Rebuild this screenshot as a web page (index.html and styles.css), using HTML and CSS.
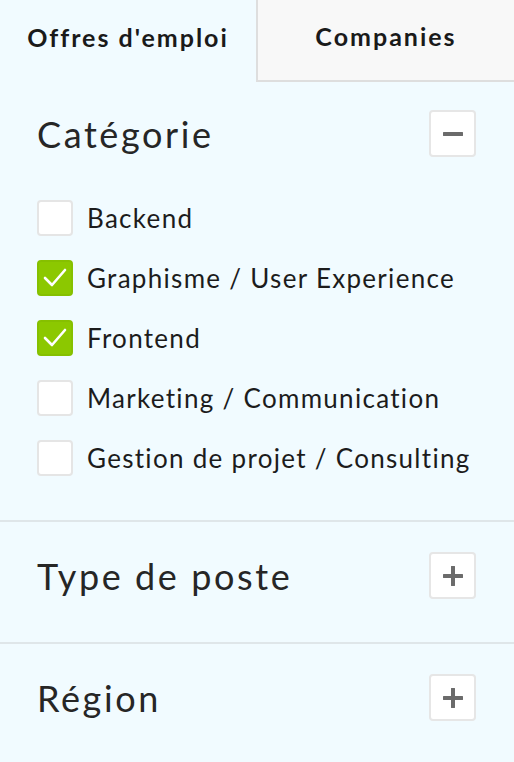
FILE: index.html
```html
<!DOCTYPE html>
<html lang="fr">
<head>
    <meta charset="UTF-8">
    <meta name="viewport" content="width=device-width, initial-scale=1.0">
    <title>Filtres</title>
    <link rel="stylesheet" href="styles.css">
</head>
<body>
    <div class="filters">
        <div class="tabs">
            <div class="tab active">Offres d'emploi</div>
            <div class="tab">Companies</div>
        </div>

        <div class="section">
            <div class="section-head">
                <h2>Catégorie</h2>
                <button class="toggle" aria-label="Réduire">
                    <svg width="20" height="20" viewBox="0 0 20 20"><path d="M1 10h18" stroke="#6b6b6b" stroke-width="4" stroke-linecap="round"/></svg>
                </button>
            </div>
            <ul class="options">
                <li><span class="box"></span>Backend</li>
                <li><span class="box checked"><svg width="32" height="32" viewBox="0 0 32 32"><path d="M6 16l7 7 13-15" fill="none" stroke="#fff" stroke-width="2.6" stroke-linecap="round" stroke-linejoin="round"/></svg></span>Graphisme / User Experience</li>
                <li><span class="box checked"><svg width="32" height="32" viewBox="0 0 32 32"><path d="M6 16l7 7 13-15" fill="none" stroke="#fff" stroke-width="2.6" stroke-linecap="round" stroke-linejoin="round"/></svg></span>Frontend</li>
                <li><span class="box"></span>Marketing / Communication</li>
                <li><span class="box"></span>Gestion de projet / Consulting</li>
            </ul>
        </div>

        <div class="section">
            <div class="section-head">
                <h2>Type de poste</h2>
                <button class="toggle" aria-label="Ouvrir">
                    <svg width="20" height="20" viewBox="0 0 20 20"><path d="M1 10h18M10 1v18" stroke="#6b6b6b" stroke-width="4" stroke-linecap="round"/></svg>
                </button>
            </div>
        </div>

        <div class="section">
            <div class="section-head">
                <h2>Région</h2>
                <button class="toggle" aria-label="Ouvrir">
                    <svg width="20" height="20" viewBox="0 0 20 20"><path d="M1 10h18M10 1v18" stroke="#6b6b6b" stroke-width="4" stroke-linecap="round"/></svg>
                </button>
            </div>
        </div>
    </div>
</body>
</html>
```

FILE: styles.css
```css
body {
    margin: 0;
    font-family: Lato, "Open Sans", sans-serif;
    background-color: #f1fbff;
    color: #1c1c1c;
}

.filters {
    width: 514px;
}

.tabs {
    display: flex;
    height: 82px;
}

.tab {
    flex: 1;
    display: flex;
    align-items: center;
    justify-content: center;
    padding-bottom: 8px;
    box-sizing: border-box;
    font-size: 25px;
    font-weight: bold;
    letter-spacing: 2px;
    color: #1a1a1a;
}

.tab.active {
    background-color: #f1fbff;
}

.tab:not(.active) {
    background-color: #f8f8f8;
    border-left: 2px solid #dedede;
    border-bottom: 2px solid #dedede;
}

.section {
    padding: 28px 38px 43px 37px;
    border-bottom: 2px solid #dfe6e9;
}

.section + .section {
    padding-top: 30px;
}

.section:last-child {
    border-bottom: none;
}

.section-head {
    display: flex;
    align-items: center;
    justify-content: space-between;
    height: 47px;
}

h2 {
    margin: 0;
    font-size: 36px;
    font-weight: normal;
    letter-spacing: 2.6px;
    color: #262626;
}

.toggle {
    width: 47px;
    height: 47px;
    padding: 0;
    display: flex;
    align-items: center;
    justify-content: center;
    background-color: #fff;
    border: 2px solid #e6e6e6;
    border-radius: 4px;
}

.options {
    list-style: none;
    margin: 43px 0 1px;
    padding: 0;
    display: flex;
    flex-direction: column;
    gap: 24px;
}

.options li {
    display: flex;
    align-items: center;
    height: 36px;
    font-size: 26px;
    letter-spacing: 1.3px;
}

.box {
    width: 36px;
    height: 36px;
    box-sizing: border-box;
    margin-right: 14px;
    display: flex;
    align-items: center;
    justify-content: center;
    background-color: #fff;
    border: 2px solid #e5e5e5;
    border-radius: 4px;
}

.box.checked {
    background-color: #8cc800;
    border-color: #86c000;
}
```
